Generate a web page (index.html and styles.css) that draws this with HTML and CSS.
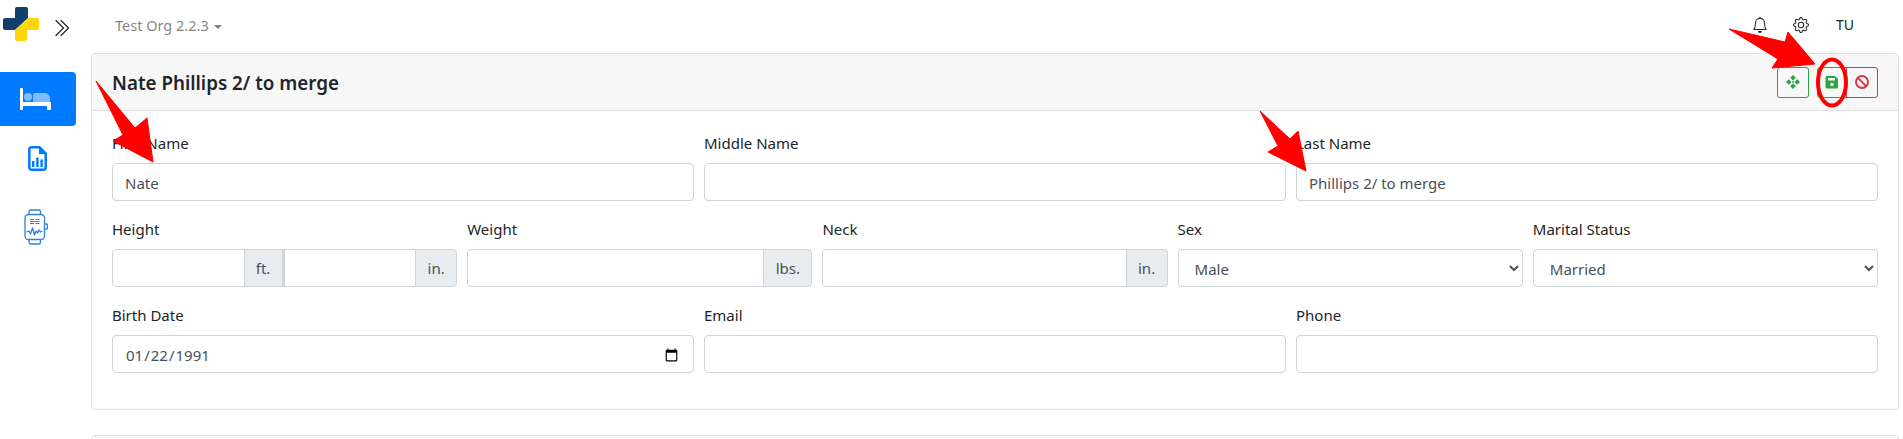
FILE: index.html
```html
<!DOCTYPE html>
<html lang="en">
<head>
<meta charset="utf-8">
<title>Test Org</title>
<link rel="stylesheet" href="styles.css">
</head>
<body>
<div class="app">
  <aside class="sidebar">
    <div class="brand">
      <svg class="logo" viewBox="0 0 36 34" width="36" height="34">
        <path fill="#12406b" d="M14 0h9a2 2 0 0 1 2 2v9l-13 12H2a2 2 0 0 1-2-2v-8a2 2 0 0 1 2-2h10V2a2 2 0 0 1 2-2z"/>
        <path fill="#ffd60a" d="M25 11h9a2 2 0 0 1 2 2v8a2 2 0 0 1-2 2H24v9a2 2 0 0 1-2 2h-8a2 2 0 0 1-2-2v-9z"/>
      </svg>
      <svg class="toggle" viewBox="0 0 16 16" width="20" height="20" fill="#212529">
        <path d="M3.646 1.646a.5.5 0 0 1 .708 0l6 6a.5.5 0 0 1 0 .708l-6 6a.5.5 0 0 1-.708-.708L9.293 8 3.646 2.354a.5.5 0 0 1 0-.708z"/>
        <path d="M7.646 1.646a.5.5 0 0 1 .708 0l6 6a.5.5 0 0 1 0 .708l-6 6a.5.5 0 0 1-.708-.708L13.293 8 7.646 2.354a.5.5 0 0 1 0-.708z"/>
      </svg>
    </div>
    <nav class="side-nav">
      <a class="side-item active">
        <svg viewBox="0 0 31 22" width="31" height="22">
          <rect x="0" y="0" width="3" height="22" rx="1" fill="#fff"/>
          <rect x="0" y="14" width="31" height="4" fill="#fff"/>
          <rect x="27" y="14" width="4" height="8" rx="1" fill="#fff"/>
          <circle cx="8" cy="9" r="4" fill="#80bdff"/>
          <path d="M13 7a2 2 0 0 1 2-2h10a5 5 0 0 1 5 5v4H13z" fill="#80bdff"/>
        </svg>
      </a>
      <a class="side-item chart">
        <svg viewBox="0 0 19 25" width="19" height="25">
          <path d="M3.5 1.3h8L17.7 7.5v14a2.2 2.2 0 0 1-2.2 2.2h-12a2.2 2.2 0 0 1-2.2-2.2v-18a2.2 2.2 0 0 1 2.2-2.2z" fill="none" stroke="#007bff" stroke-width="2.5"/>
          <path d="M11 1l7 7h-7z" fill="#007bff"/>
          <path d="M4 15h2.4v6H4zM8.2 11.5h2.4V21H8.2zM12.4 13.5h2.4V21h-2.4z" fill="#007bff"/>
        </svg>
      </a>
      <a class="side-item watch">
        <svg viewBox="0 0 24 36" width="24" height="36" fill="none" stroke="#2f80e0" stroke-width="1.3" stroke-linejoin="round">
          <rect x="1" y="5.5" width="19.5" height="25" rx="3.5"/>
          <path d="M5 5.5V3a2 2 0 0 1 2-2h7.5a2 2 0 0 1 2 2v2.5M5 30.5V33a2 2 0 0 0 2 2h7.5a2 2 0 0 0 2-2v-2.500M20.500 15h2a1 1 0 0 1 1 1v3a1 1 0 0 1-1 1h-2"/>
          <path d="M6 10.500h4M11.500 10.500h4M6 12.500h9.500M6 14.500h4M11.500 14.500h4" stroke-width="1"/>
          <path d="M2.500 23l2.500-1 1.500 3 2-6 2 7 1.500-4 1.500 2 1.500-3 1.500 2 2-1"/>
        </svg>
      </a>
    </nav>
  </aside>
  <div class="main">
    <header class="topbar">
      <span class="org">Test Org 2.2.3<i class="caret"></i></span>
      <div class="top-actions">
        <svg viewBox="0 0 16 16" width="16" height="16" fill="#212529"><path d="M8 16a2 2 0 0 0 2-2H6a2 2 0 0 0 2 2zM8 1.918l-.797.161A4.002 4.002 0 0 0 4 6c0 .628-.134 2.197-.459 3.742-.16.767-.376 1.566-.663 2.258h10.244c-.287-.692-.502-1.490-.663-2.258C12.134 8.197 12 6.628 12 6a4.002 4.002 0 0 0-3.203-3.920L8 1.917zM14.220 12c.223.447.481.801.78 1H1c.299-.199.557-.553.78-1C2.680 10.200 3 6.880 3 6c0-2.420 1.720-4.440 4.005-4.901a1 1 0 1 1 1.990 0A5.002 5.002 0 0 1 13 6c0 .880.320 4.200 1.220 6z"/></svg>
        <svg viewBox="0 0 16 16" width="16" height="16" fill="#212529"><path d="M8 4.754a3.246 3.246 0 1 0 0 6.492 3.246 3.246 0 0 0 0-6.492zM5.754 8a2.246 2.246 0 1 1 4.492 0 2.246 2.246 0 0 1-4.492 0z"/><path d="M9.796 1.343c-.527-1.790-3.065-1.790-3.592 0l-.094.319a.873.873 0 0 1-1.255.520l-.292-.160c-1.640-.892-3.433.902-2.540 2.541l.159.292a.873.873 0 0 1-.520 1.255l-.319.094c-1.790.527-1.790 3.065 0 3.592l.319.094a.873.873 0 0 1 .520 1.255l-.160.292c-.892 1.640.901 3.434 2.541 2.540l.292-.159a.873.873 0 0 1 1.255.520l.094.319c.527 1.790 3.065 1.790 3.592 0l.094-.319a.873.873 0 0 1 1.255-.520l.292.160c1.640.893 3.434-.902 2.540-2.541l-.159-.292a.873.873 0 0 1 .520-1.255l.319-.094c1.790-.527 1.790-3.065 0-3.592l-.319-.094a.873.873 0 0 1-.520-1.255l.160-.292c.893-1.640-.902-3.433-2.541-2.540l-.292.159a.873.873 0 0 1-1.255-.520l-.094-.319zm-2.633.283c.246-.835 1.428-.835 1.674 0l.094.319a1.873 1.873 0 0 0 2.693 1.115l.291-.160c.764-.415 1.600.420 1.184 1.185l-.159.292a1.873 1.873 0 0 0 1.116 2.692l.318.094c.835.246.835 1.428 0 1.674l-.319.094a1.873 1.873 0 0 0-1.115 2.693l.160.291c.415.764-.420 1.600-1.185 1.184l-.291-.159a1.873 1.873 0 0 0-2.693 1.116l-.094.318c-.246.835-1.428.835-1.674 0l-.094-.319a1.873 1.873 0 0 0-2.692-1.115l-.292.160c-.764.415-1.600-.420-1.184-1.185l.159-.291A1.873 1.873 0 0 0 1.945 8.930l-.319-.094c-.835-.246-.835-1.428 0-1.674l.319-.094A1.873 1.873 0 0 0 3.060 4.377l-.160-.292c-.415-.764.420-1.600 1.185-1.184l.292.159a1.873 1.873 0 0 0 2.692-1.115l.094-.319z"/></svg>
        <span class="initials">TU</span>
      </div>
    </header>
    <section class="card">
      <div class="card-header">
        <h5 class="title">Nate Phillips 2/ to merge</h5>
        <div class="actions">
          <button class="btn btn-green btn-move" type="button">
            <svg viewBox="0 0 14 14" width="14" height="14" fill="#28a745"><path d="M7 0l2.800 2.800L7 5.400 4.200 2.800zM7 8.600l2.800 2.600L7 14l-2.800-2.800zM0 7l2.800-2.800L5.400 7 2.800 9.800zM8.600 7l2.600-2.800L14 7l-2.800 2.800z"/><circle cx="7" cy="7" r="1"/></svg>
          </button>
          <div class="btn-group">
            <button class="btn btn-green btn-save" type="button">
              <svg viewBox="0 0 14 14" width="14" height="14"><path fill="#28a745" d="M2 1h8l3 3v8a1.500 1.500 0 0 1-1.500 1.500h-9.500A1.500 1.500 0 0 1 .500 12V2.500A1.500 1.500 0 0 1 2 1z"/><rect x="3" y="3" width="7" height="2.500" fill="#f7f7f7"/><circle cx="7" cy="9.500" r="1.800" fill="#f7f7f7"/></svg>
            </button>
            <button class="btn btn-red btn-ban" type="button">
              <svg viewBox="0 0 14 14" width="14" height="14" fill="none" stroke="#dc3545" stroke-width="1.900"><circle cx="7" cy="7" r="6"/><path d="M2.800 2.800l8.400 8.400"/></svg>
            </button>
          </div>
        </div>
      </div>
      <div class="card-body">
        <div class="form-row cols-3">
          <div class="field"><label>First Name</label><input class="control" type="text" value="Nate"></div>
          <div class="field"><label>Middle Name</label><input class="control" type="text"></div>
          <div class="field"><label>Last Name</label><input class="control" type="text" value="Phillips 2/ to merge"></div>
        </div>
        <div class="form-row cols-5">
          <div class="field"><label>Height</label>
            <div class="input-group">
              <input class="control" type="text"><span class="addon addon-ft">ft.</span>
              <input class="control" type="text"><span class="addon addon-in">in.</span>
            </div>
          </div>
          <div class="field"><label>Weight</label>
            <div class="input-group"><input class="control" type="text"><span class="addon addon-lbs">lbs.</span></div>
          </div>
          <div class="field"><label>Neck</label>
            <div class="input-group"><input class="control" type="text"><span class="addon addon-in">in.</span></div>
          </div>
          <div class="field"><label>Sex</label>
            <select class="control"><option>Male</option><option>Female</option></select>
          </div>
          <div class="field"><label>Marital Status</label>
            <select class="control"><option>Married</option><option>Single</option></select>
          </div>
        </div>
        <div class="form-row cols-3">
          <div class="field"><label>Birth Date</label><input class="control" type="date" value="1991-01-22"></div>
          <div class="field"><label>Email</label><input class="control" type="text"></div>
          <div class="field"><label>Phone</label><input class="control" type="text"></div>
        </div>
      </div>
    </section>
    <section class="card card-next"><div class="card-header card-header-next"></div></section>
  </div>
</div>
<svg class="annotations" viewBox="0 0 1903 439" width="1903" height="439">
  <g fill="#ff0000" stroke="#ff0000" stroke-width="1" stroke-linejoin="round">
    <polygon points="96,81 135,128 147,118 153,162 113,141 123,135"/>
    <polygon points="1260,111 1290,139 1298,131 1306,171 1268,152 1278,146"/>
    <polygon points="1729,29 1785,42 1788,32 1815,64 1772,68 1778,59"/>
  </g>
  <ellipse cx="1832" cy="82.500" rx="14" ry="23" fill="none" stroke="#ff0000" stroke-width="4"/>
</svg>
</body>
</html>
```
FILE: styles.css
```css
* { box-sizing: border-box; }
html, body { margin: 0; padding: 0; height: 100%; overflow: hidden; background: #fff; }
body {
  font-family: "Noto Sans", "Open Sans", sans-serif;
  font-size: 15px;
  line-height: 24px;
  color: #212529;
  position: relative;
}
.app { display: flex; width: 1903px; height: 439px; overflow: hidden; }
.sidebar { width: 76px; flex: none; }
.brand { height: 72px; display: flex; align-items: flex-start; padding: 7px 0 0 3px; }
.toggle { margin: 11px 0 0 12px; }
.side-nav { display: flex; flex-direction: column; }
.side-item { display: flex; align-items: center; justify-content: center; height: 54px; }
.side-item.active { background: #007bff; border-radius: 0 4px 4px 0; padding-right: 5px; margin-bottom: 5px; }
.side-item.chart { margin-bottom: 15px; padding-right: 1px; }
.side-item.watch { padding-right: 5px; }
.main { flex: none; width: 1823px; padding: 0 4px 0 15px; }
.topbar { height: 53px; display: flex; align-items: center; justify-content: space-between; padding: 0 41px 3px 24px; }
.org { color: rgba(0,0,0,.5); font-size: 14.5px; }
.caret {
  display: inline-block; margin-left: 5px; vertical-align: 2px;
  border-top: 4px solid rgba(0,0,0,.5); border-left: 4px solid transparent; border-right: 4px solid transparent;
}
.top-actions { display: flex; align-items: center; gap: 25px; }
.initials { font-size: 14px; margin-left: 2px; }
.card { border: 1px solid #dfdfdf; border-radius: 4px; width: 1808px; background: #fff; }
.card-header {
  height: 57px; background: #f7f7f7; border-bottom: 1px solid #dfdfdf;
  display: flex; align-items: center; justify-content: space-between;
  padding: 0 20px; border-radius: 3px 3px 0 0;
}
.title { margin: 2px 0 0; font-size: 18.8px; font-weight: 600; line-height: 24px; color: #212529; }
.actions { display: flex; align-items: center; gap: 8px; }
.btn-group { display: flex; }
.btn {
  height: 31px; width: 32px; padding: 0; background: transparent; border-radius: 3px;
  border: 1px solid; display: flex; align-items: center; justify-content: center;
}
.btn-green { border-color: #28a745; }
.btn-red { border-color: #dc3545; }
.btn-save { width: 30px; border-radius: 3px 0 0 3px; }
.btn-ban { margin-left: -1px; border-radius: 0 3px 3px 0; }
.card-body { padding: 20px; }
.form-row { display: grid; gap: 10px; margin-bottom: 16px; }
.cols-3 { grid-template-columns: repeat(3, 1fr); }
.cols-5 { grid-template-columns: repeat(5, 1fr); }
.field { min-width: 0; }
label { display: block; height: 24px; margin-bottom: 8px; }
.control {
  display: block; width: 100%; height: 38px; padding: 7px 12px 5px;
  font: inherit; color: #495057; background: #fff;
  border: 1px solid #ced4da; border-radius: 4px; min-width: 0;
}
.input-group { display: flex; }
.input-group .control { flex: 1 1 0; width: auto; border-radius: 0; }
.input-group .control:first-child { border-radius: 4px 0 0 4px; }
.addon {
  flex: none; height: 38px; display: flex; align-items: center; justify-content: center;
  background: #e9ecef; color: #495057; border: 1px solid #ced4da; margin-left: -1px;
}
.addon-ft { width: 40px; border-right-width: 2px; }
.addon-in { width: 42px; border-radius: 0 4px 4px 0; }
.addon-lbs { width: 49px; border-radius: 0 4px 4px 0; }
.card-next { margin-top: 25px; }
.card-header-next { height: 20px; }
.annotations { position: absolute; left: 0; top: 0; pointer-events: none; }
```
